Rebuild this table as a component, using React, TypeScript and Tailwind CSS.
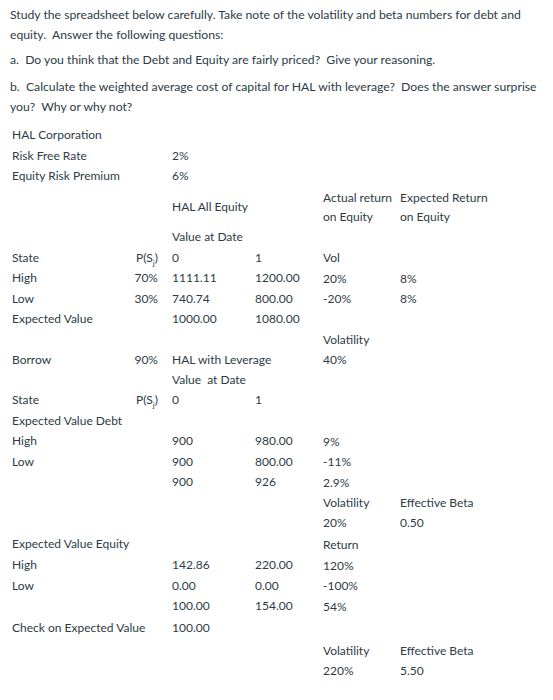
import React from "react";

type Cell = string | undefined;

// spreadsheet rows: [label, prob, date0, date1, colE, colF]
const rows: { cells: Cell[]; h?: string }[] = [
  { cells: ["HAL Corporation"] },
  { cells: ["Risk Free Rate", "", "2%"] },
  { cells: ["Equity Risk Premium", "", "6%"] },
  { cells: ["", "", "HAL All Equity", "", "Actual return\non Equity", "Expected Return\non Equity"], h: "h-[41px]" },
  { cells: ["", "", "Value at Date"] },
  { cells: ["State", "P(S)", "0", "1", "Vol"] },
  { cells: ["High", "70%", "1111.11", "1200.00", "20%", "8%"] },
  { cells: ["Low", "30%", "740.74", "800.00", "-20%", "8%"] },
  { cells: ["Expected Value", "", "1000.00", "1080.00"] },
  { cells: ["", "", "", "", "Volatility"] },
  { cells: ["Borrow", "90%", "HAL with Leverage", "", "40%"] },
  { cells: ["", "", "Value\u00a0 at Date"] },
  { cells: ["State", "P(S)", "0", "1"] },
  { cells: ["Expected Value Debt"] },
  { cells: ["High", "", "900", "980.00", "9%"] },
  { cells: ["Low", "", "900", "800.00", "-11%"] },
  { cells: ["", "", "900", "926", "2.9%"] },
  { cells: ["", "", "", "", "Volatility", "Effective Beta"] },
  { cells: ["", "", "", "", "20%", "0.50"] },
  { cells: ["Expected Value Equity", "", "", "", "Return"], h: "h-[22px]" },
  { cells: ["High", "", "142.86", "220.00", "120%"] },
  { cells: ["Low", "", "0.00", "0.00", "-100%"] },
  { cells: ["", "", "100.00", "154.00", "54%"] },
  { cells: ["Check on Expected Value", "", "100.00"], h: "h-[24px]" },
  { cells: ["", "", "", "", "Volatility", "Effective Beta"] },
  { cells: ["", "", "", "", "220%", "5.50"] },
];

function Prob({ text }: { text: string }) {
  if (text === "P(S)")
    return (
      <span>
        P(S<sub className="text-[8px] align-[-2px]">j</sub>)
      </span>
    );
  return <span>{text}</span>;
}

function Lines({ text }: { text?: string }) {
  if (!text) return null;
  return (
    <>
      {text.split("\n").map((l, i) => (
        <div key={i}>{l}</div>
      ))}
    </>
  );
}

export default function App() {
  return (
    <div className="bg-white w-[553px] h-[700px] overflow-hidden text-[#2d3b45] font-['Lato','Liberation_Sans',sans-serif]">
      <div className="pl-[10px] pt-[5px] text-[12.2px] leading-[20px] whitespace-nowrap">
        <p>
          Study the spreadsheet below carefully. Take note of the volatility and beta numbers for debt and
          <br />
          equity.&nbsp; Answer the following questions:
        </p>
        <p className="mt-[5px]">a.&nbsp; Do you think that the Debt and Equity are fairly priced?&nbsp; Give your reasoning.</p>
        <p className="mt-[7px]">
          b.&nbsp; Calculate the weighted average cost of capital for HAL with leverage?&nbsp; Does the answer surprise
          <br />
          you?&nbsp; Why or why not?
        </p>
      </div>

      <div className="mt-[8px] pl-[12px] text-[12px]">
        {rows.map((r, i) => {
          const [a, b, c, d, e, f] = r.cells;
          return (
            <div
              key={i}
              className={`grid grid-cols-[100px_46px_14px_83px_68px_77px_130px] items-center whitespace-nowrap ${r.h ?? "h-[20.4px]"}`}
            >
              <div>{a}</div>
              <div className="text-right">{b ? <Prob text={b} /> : null}</div>
              <div />
              <div>{c}</div>
              <div>{d}</div>
              <div className="leading-[19px]">
                <Lines text={e} />
              </div>
              <div className="leading-[19px]">
                <Lines text={f} />
              </div>
            </div>
          );
        })}
      </div>
    </div>
  );
}
